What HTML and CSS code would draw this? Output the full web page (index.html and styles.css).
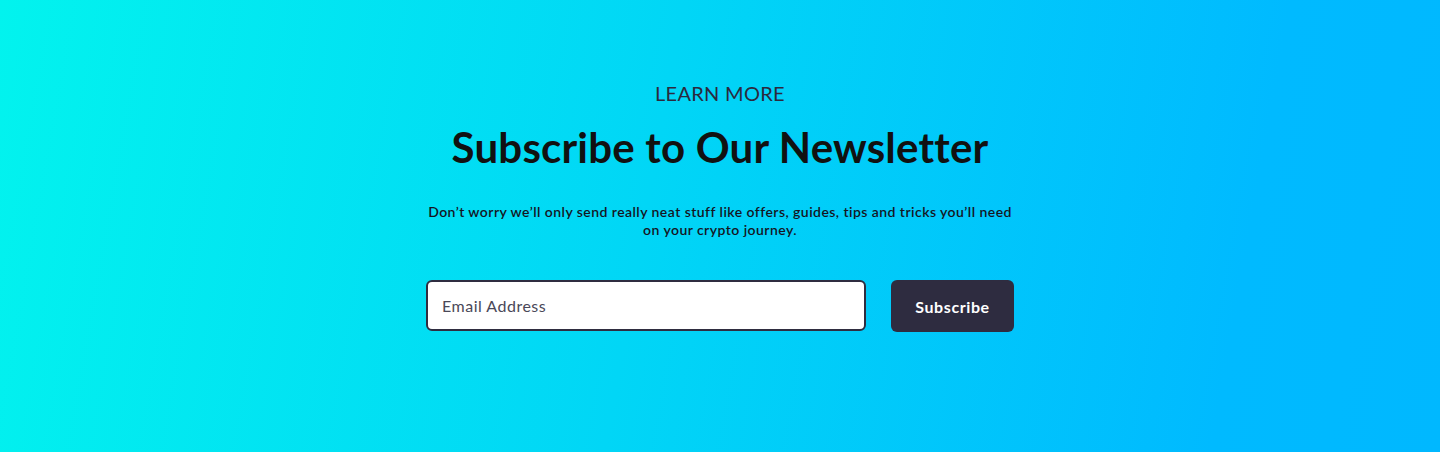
FILE: index.html
```html
<!DOCTYPE html>
<html lang="en">
<head>
<meta charset="utf-8">
<title>Newsletter</title>
<link rel="stylesheet" href="styles.css">
</head>
<body>
<section class="newsletter">
  <p class="eyebrow">LEARN MORE</p>
  <h1 class="title">Subscribe to Our Newsletter</h1>
  <p class="desc">Don’t worry we’ll only send really neat stuff like offers, guides, tips and tricks you’ll need on your crypto journey.</p>
  <form class="form">
    <input class="email" type="text" placeholder="Email Address">
    <button class="btn" type="button">Subscribe</button>
  </form>
</section>
</body>
</html>
```

FILE: styles.css
```css
* { box-sizing: border-box; }
html, body { margin: 0; padding: 0; }
body {
  font-family: "Lato", "Noto Sans", sans-serif;
  width: 1440px;
  height: 452px;
  overflow: hidden;
}
.newsletter {
  height: 452px;
  background: linear-gradient(100deg, #02f3ee 0%, #01d6f6 45%, #00baff 85%, #00b8ff 100%);
  display: flex;
  flex-direction: column;
  align-items: center;
  padding-top: 81px;
}
.eyebrow {
  margin: 0;
  font-size: 20px;
  line-height: 24px;
  color: #2b2a3e;
  letter-spacing: 0.3px;
}
.title {
  margin: 17px 0 0;
  font-size: 42px;
  line-height: 50px;
  font-weight: 700;
  color: #111;
  letter-spacing: 0.2px;
}
.desc {
  margin: 31px 0 0;
  width: 596px;
  text-align: center;
  font-size: 14px;
  line-height: 18px;
  font-weight: 600;
  color: #15151f;
  letter-spacing: 0.45px;
}
.form {
  margin-top: 41px;
  display: flex;
  gap: 25px;
}
.email {
  width: 440px;
  height: 51px;
  border: 2px solid #2f2d40;
  border-radius: 6px;
  background: #fff;
  padding: 0 14px;
  font-family: inherit;
  font-size: 16px;
  letter-spacing: 0.5px;
  color: #2e2c40;
  outline: none;
}
.email::placeholder { color: #4a4858; }
.btn {
  width: 123px;
  height: 52px;
  border: none;
  border-radius: 6px;
  background: #2e2c40;
  color: #fff;
  font-family: inherit;
  font-size: 16px;
  letter-spacing: 0.6px;
  font-weight: 700;
}
```
